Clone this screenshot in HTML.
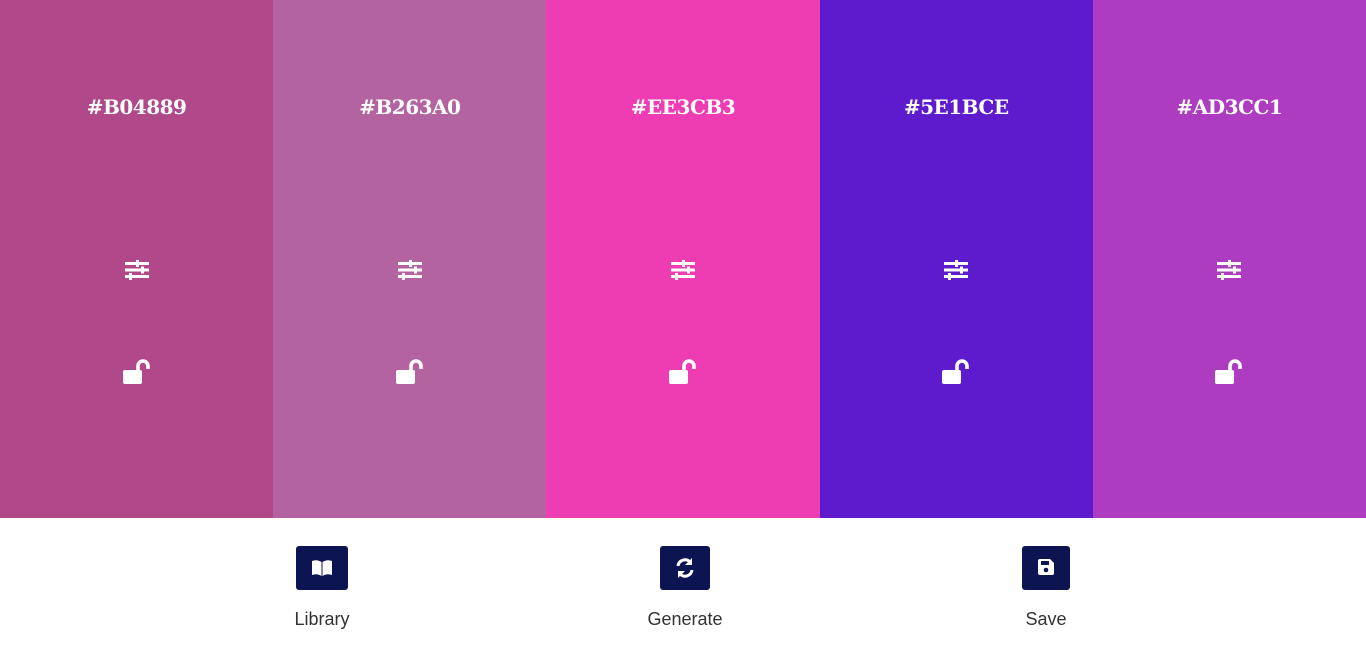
<!DOCTYPE html>
<html><head><style>
body{margin:0;width:1366px;height:647px;background:#fff;font-family:"Liberation Serif",serif;overflow:hidden;position:relative}
.cols{display:flex;height:518px}
.c{flex:1;position:relative;color:#fff}
.h{position:absolute;top:95px;width:100%;text-align:center;font-size:20px;font-weight:bold;letter-spacing:-0.5px;font-family:"DejaVu Serif",serif}
.s{position:absolute;top:259px;left:50%;margin-left:-13px}
.l{position:absolute;top:359px;left:50%;margin-left:-14px}
.b{position:absolute;top:546px;height:44px;background:#0c1452;border-radius:3px}
.t{position:absolute;top:609px;font-size:18px;color:#333;font-family:"Liberation Sans",sans-serif;text-align:center;width:120px}
</style></head><body>
<div class="cols">
<div class="c" style="background:#B04889"><div class="h">#B04889</div>
<svg class="s" width="26" height="22" viewBox="0 0 26 22"><g fill="#fff"><rect x="1" y="3" width="24" height="3"/><rect x="1" y="9.5" width="24" height="3"/><rect x="1" y="16" width="24" height="3"/><rect x="12" y="1" width="3" height="7"/><rect x="17" y="7.5" width="3" height="7"/><rect x="5" y="14" width="3" height="7"/></g></svg>
<svg class="l" width="28" height="26" viewBox="0 0 28 26"><rect x="0" y="11" width="19" height="14" rx="2" fill="#fff"/><path d="M15 12V7a5 5 0 0 1 10 0v3" stroke="#fff" stroke-width="3.6" fill="none"/></svg></div>
<div class="c" style="background:#B263A0"><div class="h">#B263A0</div>
<svg class="s" width="26" height="22" viewBox="0 0 26 22"><g fill="#fff"><rect x="1" y="3" width="24" height="3"/><rect x="1" y="9.5" width="24" height="3"/><rect x="1" y="16" width="24" height="3"/><rect x="12" y="1" width="3" height="7"/><rect x="17" y="7.5" width="3" height="7"/><rect x="5" y="14" width="3" height="7"/></g></svg>
<svg class="l" width="28" height="26" viewBox="0 0 28 26"><rect x="0" y="11" width="19" height="14" rx="2" fill="#fff"/><path d="M15 12V7a5 5 0 0 1 10 0v3" stroke="#fff" stroke-width="3.6" fill="none"/></svg></div>
<div class="c" style="background:#EE3CB3"><div class="h">#EE3CB3</div>
<svg class="s" width="26" height="22" viewBox="0 0 26 22"><g fill="#fff"><rect x="1" y="3" width="24" height="3"/><rect x="1" y="9.5" width="24" height="3"/><rect x="1" y="16" width="24" height="3"/><rect x="12" y="1" width="3" height="7"/><rect x="17" y="7.5" width="3" height="7"/><rect x="5" y="14" width="3" height="7"/></g></svg>
<svg class="l" width="28" height="26" viewBox="0 0 28 26"><rect x="0" y="11" width="19" height="14" rx="2" fill="#fff"/><path d="M15 12V7a5 5 0 0 1 10 0v3" stroke="#fff" stroke-width="3.6" fill="none"/></svg></div>
<div class="c" style="background:#5E1BCE"><div class="h">#5E1BCE</div>
<svg class="s" width="26" height="22" viewBox="0 0 26 22"><g fill="#fff"><rect x="1" y="3" width="24" height="3"/><rect x="1" y="9.5" width="24" height="3"/><rect x="1" y="16" width="24" height="3"/><rect x="12" y="1" width="3" height="7"/><rect x="17" y="7.5" width="3" height="7"/><rect x="5" y="14" width="3" height="7"/></g></svg>
<svg class="l" width="28" height="26" viewBox="0 0 28 26"><rect x="0" y="11" width="19" height="14" rx="2" fill="#fff"/><path d="M15 12V7a5 5 0 0 1 10 0v3" stroke="#fff" stroke-width="3.6" fill="none"/></svg></div>
<div class="c" style="background:#AD3CC1"><div class="h">#AD3CC1</div>
<svg class="s" width="26" height="22" viewBox="0 0 26 22"><g fill="#fff"><rect x="1" y="3" width="24" height="3"/><rect x="1" y="9.5" width="24" height="3"/><rect x="1" y="16" width="24" height="3"/><rect x="12" y="1" width="3" height="7"/><rect x="17" y="7.5" width="3" height="7"/><rect x="5" y="14" width="3" height="7"/></g></svg>
<svg class="l" width="28" height="26" viewBox="0 0 28 26"><rect x="0" y="11" width="19" height="14" rx="2" fill="#fff"/><path d="M15 12V7a5 5 0 0 1 10 0v3" stroke="#fff" stroke-width="3.6" fill="none"/></svg></div>
</div>
<div class="b" style="left:296px;width:52px"><svg style="position:absolute;left:15px;top:13px" width="22" height="18" viewBox="0 0 22 18"><path d="M1 2Q6 0 10.5 3V17Q6 14 1 16Z M11.5 3Q16 0 21 2V16Q16 14 11.5 17Z" fill="#fff"/></svg></div>
<div class="b" style="left:660px;width:50px"><svg style="position:absolute;left:15px;top:11px" width="20" height="22" viewBox="0 0 20 22"><path d="M3 9A7 7 0 0 1 15 5" stroke="#fff" stroke-width="3" fill="none"/><path d="M17 1V8H10Z" fill="#fff"/><path d="M17 13A7 7 0 0 1 5 17" stroke="#fff" stroke-width="3" fill="none"/><path d="M3 21V14H10Z" fill="#fff"/></svg></div>
<div class="b" style="left:1022px;width:48px"><svg style="position:absolute;left:16px;top:13px" width="16" height="16" viewBox="0 0 16 16"><path d="M0 2a2 2 0 0 1 2-2h10l4 4v10a2 2 0 0 1-2 2H2a2 2 0 0 1-2-2Z" fill="#fff"/><rect x="3" y="2" width="8" height="4" fill="#0c1452"/><circle cx="8" cy="11" r="2.3" fill="#0c1452"/></svg></div>
<div class="t" style="left:262px">Library</div>
<div class="t" style="left:625px">Generate</div>
<div class="t" style="left:986px">Save</div>
</body></html>
